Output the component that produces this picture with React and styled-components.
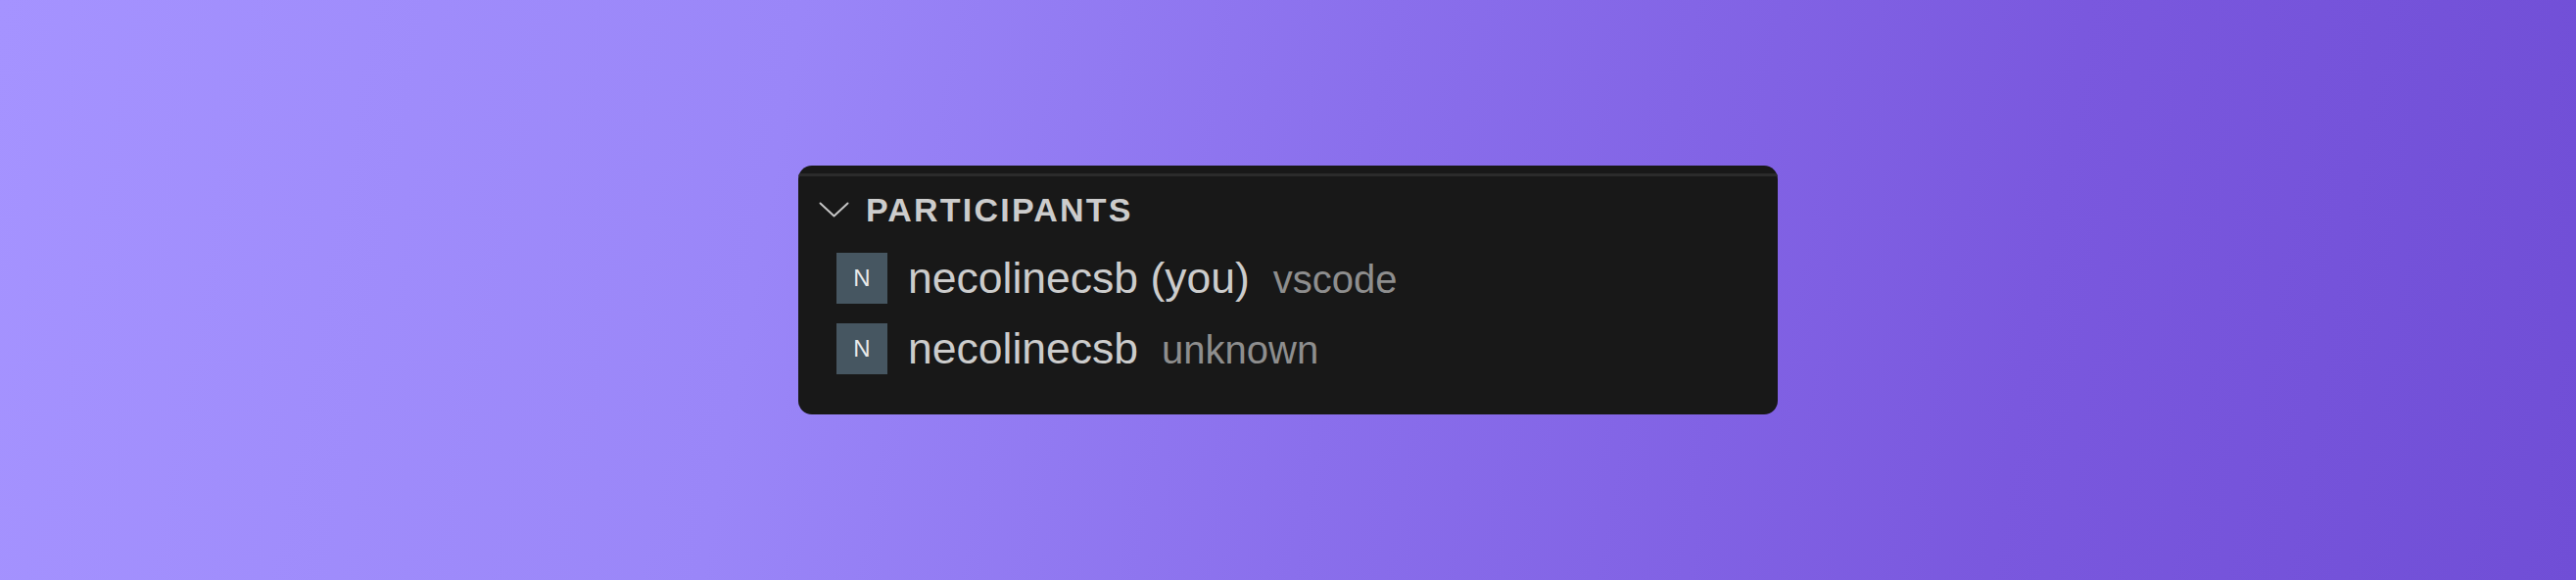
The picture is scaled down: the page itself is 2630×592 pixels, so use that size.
import React from "react";
import styled, { createGlobalStyle } from "styled-components";

const GlobalStyle = createGlobalStyle`
  html, body {
    margin: 0;
    padding: 0;
  }
  body {
    font-family: "Liberation Sans", Arial, sans-serif;
  }
`;

const Page = styled.div`
  width: 100%;
  height: 592px;
  display: flex;
  align-items: center;
  justify-content: center;
  background: linear-gradient(100deg, #a593ff 0%, #9a86f8 30%, #8a6fec 52%, #7a58de 78%, #704ed6 100%);
`;

const Panel = styled.section`
  width: 1000px;
  height: 254px;
  box-sizing: border-box;
  background: #181818;
  border-radius: 14px;
  padding-top: 8px;
  padding-bottom: 31px;
  display: flex;
  flex-direction: column;
  overflow: hidden;
`;

const Header = styled.div`
  height: 68px;
  border-top: 3px solid #2b2b2b;
  box-sizing: content-box;
  display: flex;
  align-items: center;
  padding-left: 21px;
  gap: 17px;
`;

const Chevron = styled.svg`
  width: 31px;
  height: 16px;
  flex: none;
`;

const Title = styled.h2`
  margin: 0;
  font-family: "Liberation Sans", Arial, sans-serif;
  font-size: 34px;
  line-height: 1;
  font-weight: 700;
  letter-spacing: 2.2px;
  color: #cccccc;
  text-transform: uppercase;
`;

const List = styled.ul`
  list-style: none;
  margin: 0;
  padding: 0;
  display: flex;
  flex-direction: column;
`;

const Row = styled.li`
  height: 72px;
  display: flex;
  align-items: center;
  padding-left: 39px;
  gap: 21px;
`;

const Avatar = styled.div`
  width: 52px;
  height: 52px;
  flex: none;
  background: #465661;
  display: flex;
  align-items: center;
  justify-content: center;
  color: #e9e9e9;
  font-family: "Liberation Sans", Arial, sans-serif;
  font-size: 24px;
  line-height: 1;
`;

const Label = styled.div`
  display: flex;
  align-items: baseline;
  gap: 24px;
  line-height: 1;
`;

const Name = styled.span`
  font-size: 44.5px;
  color: #cccccc;
`;

const Description = styled.span`
  font-size: 40px;
  color: #8e8e8e;
`;

const participants = [
  { initial: "N", name: "necolinecsb (you)", client: "vscode" },
  { initial: "N", name: "necolinecsb", client: "unknown" },
];

export default function App() {
  return (
    <>
      <GlobalStyle />
      <Page>
        <Panel>
          <Header>
            <Chevron viewBox="0 0 31 16" fill="none">
              <polyline
                points="1.5,1.5 15.5,14.5 29.5,1.5"
                stroke="#c5c5c5"
                strokeWidth="2"
                strokeLinecap="round"
                strokeLinejoin="round"
              />
            </Chevron>
            <Title>Participants</Title>
          </Header>
          <List>
            {participants.map((p, i) => (
              <Row key={i}>
                <Avatar>{p.initial}</Avatar>
                <Label>
                  <Name>{p.name}</Name>
                  <Description>{p.client}</Description>
                </Label>
              </Row>
            ))}
          </List>
        </Panel>
      </Page>
    </>
  );
}
